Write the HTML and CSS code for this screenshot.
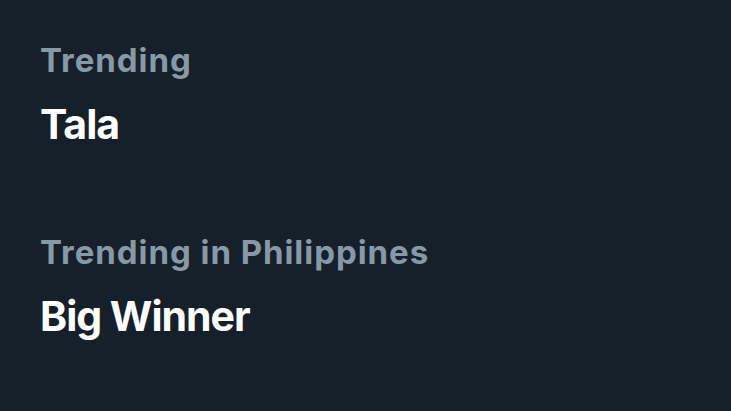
FILE: index.html
```html
<!DOCTYPE html>
<html>
<head>
<meta charset="utf-8">
<link rel="stylesheet" href="styles.css">
</head>
<body>
<div class="list">
  <div class="trend">
    <div class="label">Trending</div>
    <div class="name">Tala</div>
  </div>
  <div class="trend">
    <div class="label">Trending in Philippines</div>
    <div class="name">Big Winner</div>
  </div>
</div>
</body>
</html>
```
FILE: styles.css
```css
html, body {
  margin: 0;
  padding: 0;
  background: #16202b;
  height: 100%;
}
body {
  font-family: Inter, "Liberation Sans", sans-serif;
  -webkit-font-smoothing: antialiased;
}
.list {
  display: flex;
  flex-direction: column;
  gap: 80px;
  padding: 40px 40px;
}
.trend {
  display: flex;
  flex-direction: column;
  gap: 16px;
}
.label {
  color: #8899a6;
  font-size: 33px;
  font-weight: 700;
  line-height: 40px;
  letter-spacing: 0.95px;
}
.name {
  color: #ffffff;
  font-size: 41px;
  font-weight: 700;
  line-height: 56px;
  letter-spacing: -1px;
}
```
